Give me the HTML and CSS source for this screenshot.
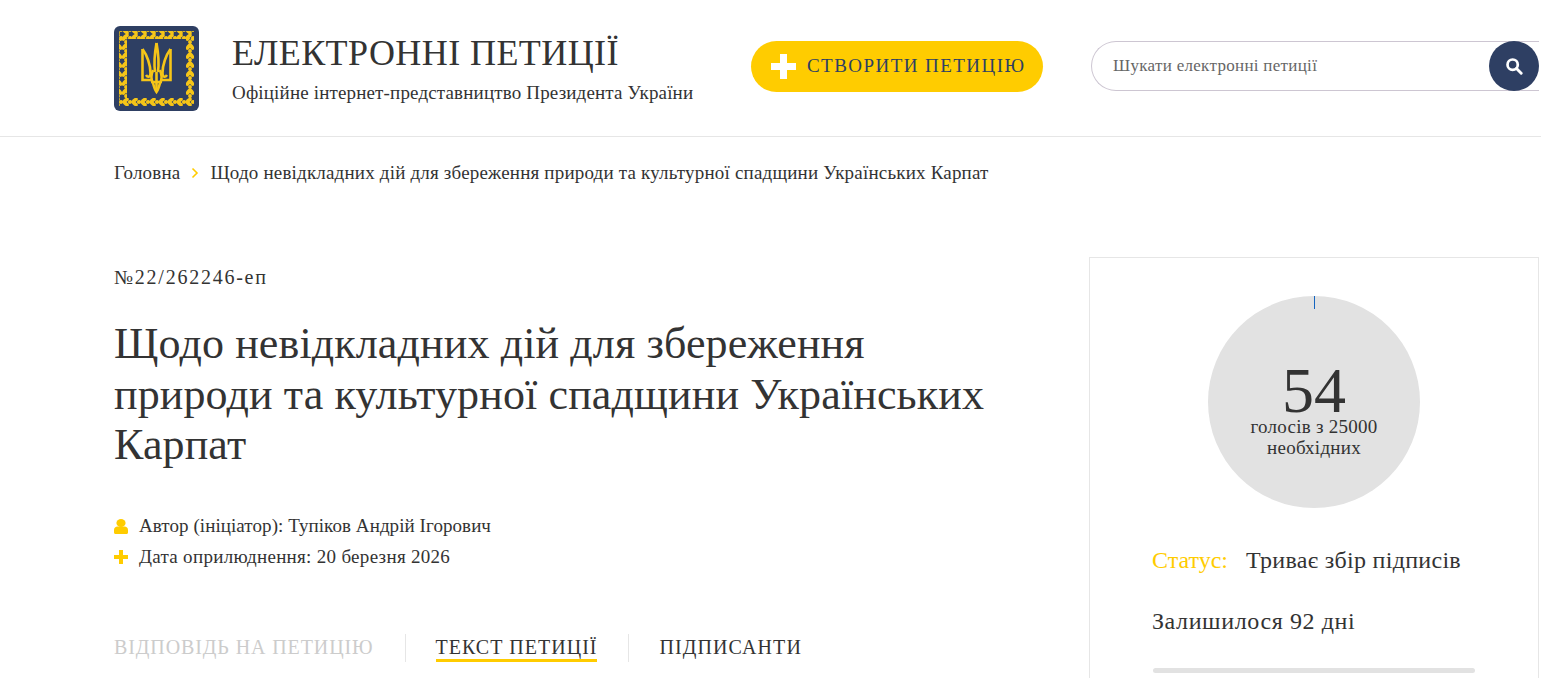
FILE: index.html
```html
<!DOCTYPE html>
<html lang="uk">
<head>
    <meta charset="UTF-8">
    <title>Електронні петиції</title>
    <link rel="stylesheet" href="styles.css">
</head>
<body>

<header class="site-header">
    <a class="logo" href="#">
        <svg viewBox="0 0 85 85" width="85" height="85">
            <defs>
                <pattern id="leaf-h" width="9" height="8" patternUnits="userSpaceOnUse">
                    <ellipse cx="2.8" cy="2.3" rx="3.4" ry="1.9" fill="#f5c518" transform="rotate(-35 2.8 2.3)"/>
                    <ellipse cx="2.8" cy="5.7" rx="3.4" ry="1.9" fill="#f5c518" transform="rotate(35 2.8 5.7)"/>
                    <ellipse cx="7" cy="4" rx="2.1" ry="1.9" fill="#f5c518"/>
                </pattern>
                <pattern id="leaf-v" width="8" height="9" patternUnits="userSpaceOnUse">
                    <ellipse cx="2.3" cy="2.8" rx="1.9" ry="3.4" fill="#f5c518" transform="rotate(35 2.3 2.8)"/>
                    <ellipse cx="5.7" cy="2.8" rx="1.9" ry="3.4" fill="#f5c518" transform="rotate(-35 5.7 2.8)"/>
                    <ellipse cx="4" cy="7" rx="1.9" ry="2.1" fill="#f5c518"/>
                </pattern>
            </defs>
            <rect width="85" height="85" rx="6" fill="#2e3f63"/>
            <rect x="5" y="5" width="75" height="8" fill="url(#leaf-h)"/>
            <rect x="5" y="72" width="75" height="8" fill="url(#leaf-h)"/>
            <rect x="5" y="13" width="8" height="59" fill="url(#leaf-v)"/>
            <rect x="72" y="13" width="8" height="59" fill="url(#leaf-v)"/>
            <g fill="none" stroke="#f5c518" stroke-width="2.6">
                <path d="M28.5 23V54H39"/>
                <path d="M28.5 23C33 29 36.5 39 36.5 47C36.5 51 34 52 32 49"/>
                <path d="M56.5 23V54H46"/>
                <path d="M56.5 23C52 29 48.5 39 48.5 47C48.5 51 51 52 53 49"/>
                <path d="M42.5 17C40.5 28 40 38 41 46M42.5 17C44.5 28 45 38 44 46"/>
                <path d="M39 44C37 49 37 54 39 57C40 61 41 64 42.5 66C44 64 45 61 46 57C48 54 48 49 46 44"/>
                <path d="M42.5 46V66M37 56H48"/>
            </g>
        </svg>
    </a>
    <div class="site-title">
        <div class="site-name">ЕЛЕКТРОННІ ПЕТИЦІЇ</div>
        <div class="site-sub">Офіційне інтернет-представництво Президента України</div>
    </div>
    <a class="create-button" href="#"><span class="plus"></span><span class="create-label">СТВОРИТИ ПЕТИЦІЮ</span></a>
    <form class="search">
        <input type="text" class="search-input" placeholder="Шукати електронні петиції">
        <button type="button" class="search-button">
            <svg viewBox="0 0 20 20" width="18" height="18">
                <circle cx="8.5" cy="8.5" r="5.7" fill="none" stroke="#fff" stroke-width="3"/>
                <path d="M12.8 12.8L18 18" stroke="#fff" stroke-width="3.2" stroke-linecap="round"/>
            </svg>
        </button>
    </form>
</header>

<nav class="breadcrumbs">
    <a href="#">Головна</a>
    <svg class="crumb-arrow" viewBox="0 0 8 12" width="8" height="12"><path d="M1.5 1.5L6 6L1.5 10.5" fill="none" stroke="#ffcc00" stroke-width="1.6"/></svg>
    <span>Щодо невідкладних дій для збереження природи та культурної спадщини Українських Карпат</span>
</nav>

<main class="petition">
    <section class="petition-body">
        <div class="petition-number">№22/262246-еп</div>
        <h1 class="petition-title">Щодо невідкладних дій для збереження природи та культурної спадщини Українських Карпат</h1>
        <div class="meta-row">
            <svg class="meta-icon" viewBox="0 0 14 15" width="14" height="15">
                <ellipse cx="7" cy="4" rx="4.6" ry="4" fill="#ffcc00"/>
                <path d="M0 13.5V11C0 9 1.5 7.5 3.5 7.5H10.5C12.5 7.5 14 9 14 11V13.5C14 14.4 13.4 15 12.5 15H1.5C.6 15 0 14.4 0 13.5Z" fill="#ffcc00"/>
            </svg>
            <span>Автор (ініціатор): Тупіков Андрій Ігорович</span>
        </div>
        <div class="meta-row meta-date">
            <svg class="meta-icon" viewBox="0 0 14 14" width="14" height="14"><path d="M5 0H9V5H14V9H9V14H5V9H0V5H5Z" fill="#ffcc00"/></svg>
            <span>Дата оприлюднення: 20 березня 2026</span>
        </div>
        <div class="tabs">
            <a class="tab tab-muted" href="#">ВІДПОВІДЬ НА ПЕТИЦІЮ</a>
            <span class="tab-sep"></span>
            <a class="tab tab-active" href="#">ТЕКСТ ПЕТИЦІЇ</a>
            <span class="tab-sep"></span>
            <a class="tab tab-signers" href="#">ПІДПИСАНТИ</a>
        </div>
    </section>

    <aside class="petition-side">
        <div class="votes-circle">
            <span class="votes-tick"></span>
            <div class="votes-count">54</div>
            <div class="votes-label">голосів з 25000<br>необхідних</div>
        </div>
        <div class="status-row"><span class="status-label">Статус:</span><span>Триває збір підписів</span></div>
        <div class="days-left">Залишилося 92 дні</div>
        <div class="progress"></div>
    </aside>
</main>

</body>
</html>
```

FILE: styles.css
```css
html, body {
    height: 678px;
    overflow: hidden;
}

body {
    margin: 0;
    background-color: #fff;
    color: #333;
    font-family: "Liberation Serif", serif;
}

a {
    color: inherit;
    text-decoration: none;
}

.site-header {
    display: flex;
    align-items: center;
    height: 136px;
    padding: 0 2px 0 114px;
    border-bottom: 1px solid #e6e6e6;
}

.logo {
    display: block;
    height: 85px;
    margin-right: 33px;
}

.site-title {
    width: 519px;
}

.site-name {
    font-size: 36px;
    line-height: 40px;
    letter-spacing: 0.42px;
}

.site-sub {
    margin-top: 10px;
    font-size: 19px;
    line-height: 20px;
    letter-spacing: 0.16px;
}

.create-button {
    display: flex;
    align-items: center;
    width: 292px;
    height: 51px;
    box-sizing: border-box;
    margin-bottom: 3px;
    padding-left: 20px;
    border-radius: 26px;
    background-color: #ffcc00;
    color: #2e3f63;
    font-size: 19px;
    letter-spacing: 1.45px;
}

.create-label {
    padding-bottom: 2px;
}

.plus {
    width: 25px;
    height: 25px;
    margin-right: 11px;
    background:
        linear-gradient(#fff, #fff) center / 25px 7px no-repeat,
        linear-gradient(#fff, #fff) center / 7px 25px no-repeat;
}

.search {
    display: flex;
    align-items: center;
    width: 448px;
    height: 50px;
    margin: 0 0 4px 48px;
    box-sizing: border-box;
    border: 1px solid #cdc6d2;
    border-right: none;
    border-radius: 25px 0 0 25px;
    position: relative;
}

.search-input {
    flex: 1;
    height: 100%;
    padding: 0 60px 0 21px;
    border: none;
    outline: none;
    background: none;
    font-family: inherit;
    font-size: 17px;
    letter-spacing: 0.3px;
}

.search-input::placeholder {
    color: #666;
}

.search-button {
    position: absolute;
    right: 0;
    top: -1px;
    display: flex;
    align-items: center;
    justify-content: center;
    width: 50px;
    height: 50px;
    padding: 0;
    border: none;
    border-radius: 50%;
    background-color: #2e3f63;
}

.breadcrumbs {
    display: flex;
    align-items: center;
    padding: 26px 0 0 114px;
    font-size: 19px;
    line-height: 20px;
    letter-spacing: 0.19px;
}

.crumb-arrow {
    margin: 0 11px;
}

.petition {
    display: flex;
    align-items: flex-start;
    justify-content: space-between;
    padding: 74px 2px 0 114px;
}

.petition-body {
    width: 880px;
}

.petition-number {
    margin-top: 9px;
    font-size: 20px;
    line-height: 22px;
    letter-spacing: 1.75px;
}

.petition-title {
    margin: 31px 0 0;
    font-size: 44px;
    font-weight: normal;
    line-height: 50.5px;
    letter-spacing: 0.13px;
}

.meta-row {
    display: flex;
    align-items: center;
    height: 31px;
    font-size: 19px;
    letter-spacing: 0.07px;
}

.meta-date {
    letter-spacing: 0.3px;
}

.petition-title + .meta-row {
    margin-top: 40px;
}

.meta-icon {
    margin-right: 11px;
}

.tabs {
    display: flex;
    margin-top: 61px;
    font-size: 20px;
    letter-spacing: 0.9px;
}

.tab {
    box-sizing: border-box;
    height: 28px;
    line-height: 26px;
}

.tab-muted {
    color: #ccc;
}

.tab-active {
    border-bottom: 3px solid #ffcc00;
    letter-spacing: 1px;
}

.tab-signers {
    letter-spacing: 1.1px;
}

.tab-sep {
    width: 1px;
    height: 28px;
    margin: 0 30px 0 31px;
    background-color: #e6e6e6;
}

.petition-side {
    width: 450px;
    height: 421px;
    box-sizing: border-box;
    padding-top: 38px;
    border: 1px solid #e6e6e6;
    border-bottom: none;
}

.votes-circle {
    position: relative;
    width: 212px;
    height: 212px;
    box-sizing: border-box;
    padding-top: 70px;
    margin: 0 auto;
    border-radius: 50%;
    background-color: #e2e2e2;
    text-align: center;
}

.votes-tick {
    position: absolute;
    left: 105.5px;
    top: 0;
    width: 1px;
    height: 13px;
    background-color: #1565c0;
}

.votes-count {
    font-size: 64px;
    line-height: 50px;
}

.votes-label {
    font-size: 19px;
    line-height: 21px;
    letter-spacing: 0.25px;
}

.status-row {
    display: flex;
    gap: 18px;
    margin: 39px 0 0 62px;
    font-size: 24px;
    line-height: 26px;
    letter-spacing: 0.3px;
}

.status-label {
    color: #ffcc00;
    letter-spacing: 0;
}

.days-left {
    margin: 35px 0 0 62px;
    font-size: 24px;
    line-height: 26px;
    letter-spacing: 0.6px;
}

.progress {
    width: 322px;
    height: 5px;
    margin: 34px 0 0 63px;
    border-radius: 3px;
    background-color: #e2e2e2;
}
```
